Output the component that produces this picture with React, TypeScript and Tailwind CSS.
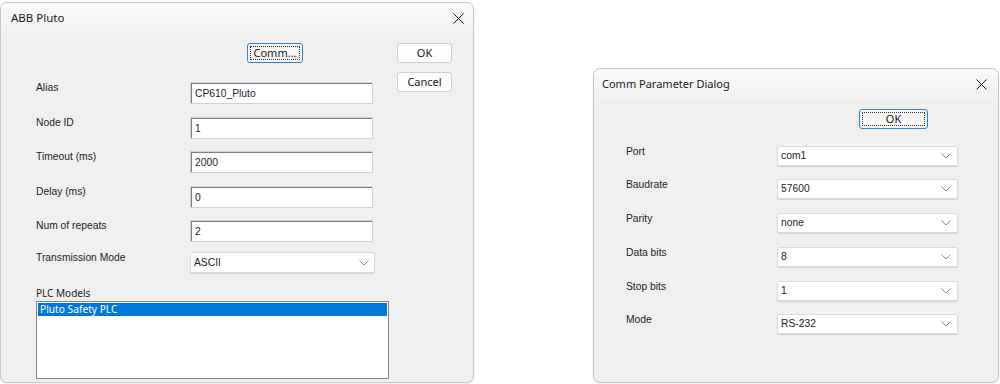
import React from "react";

const lbl = "font-['Liberation_Sans',Arial,sans-serif] text-[10.3px] leading-[12px] text-[#1e1e1e]";
const ui = "font-['Noto_Sans',sans-serif]";

function CloseX() {
  return (
    <svg width="11" height="11" viewBox="0 0 11 11" className="block">
      <path d="M0.5 0.5 L10.5 10.5 M10.5 0.5 L0.5 10.5" stroke="#1a1a1a" strokeWidth="1" fill="none" />
    </svg>
  );
}

function Chevron() {
  return (
    <svg width="10" height="6" viewBox="0 0 10 6" className="block">
      <path d="M0.5 0.5 L5 5 L9.5 0.5" stroke="#8a8a8a" strokeWidth="1" fill="none" />
    </svg>
  );
}

function Edit({ value }: { value: string }) {
  return (
    <div className="w-[183px] h-[22px] border border-[#d2d2d2] bg-white">
      <div className={`h-full border-t border-l border-[#7f7f7f] pl-[3px] flex items-center ${lbl}`}>{value}</div>
    </div>
  );
}

function Select({ value, w, pr }: { value: string; w: string; pr: string }) {
  return (
    <div className={`${w} ${pr} h-full bg-white border border-[#dcdcdc] rounded-[2px] shadow-[0_1px_1px_rgba(0,0,0,0.12)] flex items-center justify-between pl-[3px] ${lbl}`}>
      <span>{value}</span>
      <Chevron />
    </div>
  );
}

function Btn({ children, w, focus }: { children: React.ReactNode; w: string; focus?: boolean }) {
  return (
    <div
      className={`${w} h-[20px] rounded-[3px] flex items-center justify-center ${ui} text-[11px] leading-[14px] text-[#1a1a1a] ${
        focus ? "border border-[#2a86d8] bg-[#f8f8f8] p-[2px]" : "border border-[#d0d0d0] bg-[#fdfdfd]"
      }`}
    >
      {focus ? (
        <div className="w-full h-full border border-dotted border-[#333] flex items-center justify-center">{children}</div>
      ) : (
        children
      )}
    </div>
  );
}

function EditRow({ label, value, mt }: { label: string; value: string; mt: string }) {
  return (
    <div className={`flex items-start ${mt}`}>
      <div className={`w-[154px] ${lbl}`}>{label}</div>
      <Edit value={value} />
    </div>
  );
}

function CommRow({ label, value, mt }: { label: string; value: string; mt: string }) {
  return (
    <div className={`flex items-start h-[20px] ${mt}`}>
      <div className={`w-[151px] ${lbl}`}>{label}</div>
      <Select value={value} w="w-[181px]" pr="pr-[6px]" />
    </div>
  );
}

export default function App() {
  return (
    <div className="w-[1000px] h-[384px] bg-white flex items-start overflow-hidden">
      {/* Left dialog */}
      <div className="mt-[2px] w-[474px] h-[381px] shrink-0 rounded-[7px] border border-[#c6c6c6] bg-[#f0f0f0] overflow-hidden flex flex-col shadow-[0_1px_2px_rgba(0,0,0,0.08)]">
        <div className="h-[30px] shrink-0 bg-gradient-to-b from-[#fafafa] to-[#f2f2f2] flex items-center justify-between pl-[10px] pr-[9px]">
          <span className={`${ui} text-[11.5px] text-[#1a1a1a]`}>ABB Pluto</span>
          <CloseX />
        </div>
        <div className="flex flex-1">
          <div className="w-[396px] pl-[35px] pt-[10px] flex flex-col">
            <div className="pl-[211px]">
              <Btn w="w-[56px]" focus>Comm...</Btn>
            </div>
            <EditRow label="Alias" value="CP610_Pluto" mt="mt-[19px]" />
            <EditRow label="Node ID" value="1" mt="mt-[13px]" />
            <EditRow label="Timeout (ms)" value="2000" mt="mt-[12px]" />
            <EditRow label="Delay (ms)" value="0" mt="mt-[13px]" />
            <EditRow label="Num of repeats" value="2" mt="mt-[12px]" />
            <div className="flex items-start h-[21px] mt-[10px]">
              <div className={`w-[154px] ${lbl}`}>Transmission Mode</div>
              <Select value="ASCII" w="w-[185px]" pr="pr-[5px]" />
            </div>
            <div className={`mt-[13px] h-[15px] ${ui} text-[10px] leading-[15px] text-[#1a1a1a]`}>PLC Models</div>
            <div className="w-[353px] h-[78px] bg-white border border-[#828790] p-[1px]">
              <div className={`h-[13px] bg-[#0078d7] text-white ${ui} text-[10.2px] leading-[13px] pl-[2px]`}>Pluto Safety PLC</div>
            </div>
          </div>
          <div className="pt-[10px] flex flex-col gap-[9px]">
            <Btn w="w-[55px]">OK</Btn>
            <Btn w="w-[55px]">Cancel</Btn>
          </div>
        </div>
      </div>

      {/* Right dialog */}
      <div className="ml-[119px] mt-[68px] w-[406px] h-[315px] shrink-0 rounded-[7px] border border-[#c6c6c6] bg-[#f0f0f0] overflow-hidden flex flex-col shadow-[0_1px_2px_rgba(0,0,0,0.08)]">
        <div className="h-[30px] shrink-0 bg-gradient-to-b from-[#fafafa] to-[#f2f2f2] flex items-center justify-between pl-[8px] pr-[11px]">
          <span className={`${ui} text-[11px] text-[#1a1a1a]`}>Comm Parameter Dialog</span>
          <CloseX />
        </div>
        <div className="flex flex-col pt-[10px] pl-[32px]">
          <div className="pl-[233px]">
            <Btn w="w-[69px]" focus>OK</Btn>
          </div>
          <CommRow label="Port" value="com1" mt="mt-[17px]" />
          <CommRow label="Baudrate" value="57600" mt="mt-[13px]" />
          <CommRow label="Parity" value="none" mt="mt-[14px]" />
          <CommRow label="Data bits" value="8" mt="mt-[14px]" />
          <CommRow label="Stop bits" value="1" mt="mt-[14px]" />
          <CommRow label="Mode" value="RS-232" mt="mt-[13px]" />
        </div>
      </div>
    </div>
  );
}
